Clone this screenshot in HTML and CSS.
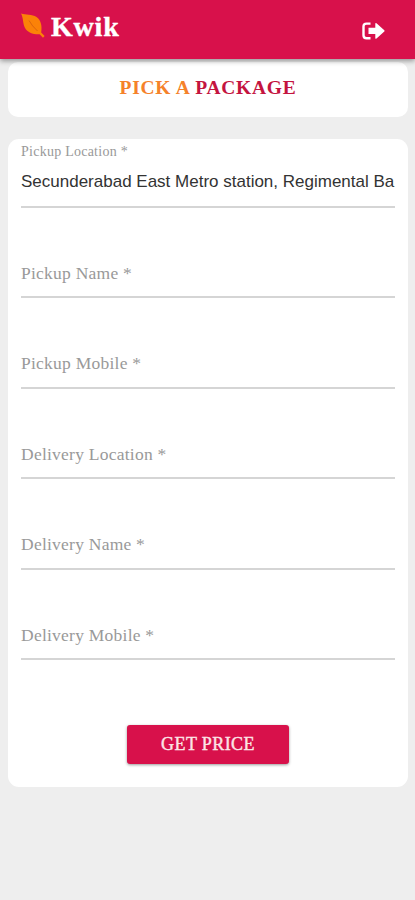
FILE: index.html
```html
<!DOCTYPE html>
<html lang="en">
<head>
<meta charset="utf-8">
<title>Kwik</title>
<link rel="stylesheet" href="styles.css">
</head>
<body>
<header class="bar">
  <div class="brand">
    <svg class="leaf" viewBox="0 0 24 26"><path d="M0 .5C5 2.200 11 1.200 15.500 4C20 7 21.300 13 20.200 19.500L23.600 23L22 24.800L18.600 21.300C12 21.600 6.500 19.500 4 15C1.600 10.500 2.600 5.500 0 .500Z" fill="#fb8208"/><path d="M8 7.500Q11 13 16.500 18" fill="none" stroke="#d8600f" stroke-width=".9"/></svg>
    <span class="name">Kwik</span>
  </div>
  <svg class="exit" viewBox="0 0 23 18"><path d="M8.500 1.600H4.500Q1.500 1.600 1.500 4.600V13.200Q1.500 16.200 4.500 16.200H8.500" fill="none" stroke="#fff" stroke-width="2.400"/><path d="M6.500 5.700H13.300V1.500Q13.500.5 14.500 1.200L22.300 8.200Q23 8.900 22.300 9.600L14.500 16.600Q13.500 17.200 13.300 16.200V12.100H6.500Z" fill="#fff"/></svg>
</header>
<main>
  <h1 class="title"><span class="accent">PICK A</span> PACKAGE</h1>
  <form class="card">
    <div class="field filled"><label>Pickup Location *</label><div class="value">Secunderabad East Metro station, Regimental Ba</div></div>
    <div class="field"><label>Pickup Name *</label></div>
    <div class="field"><label>Pickup Mobile *</label></div>
    <div class="field"><label>Delivery Location *</label></div>
    <div class="field"><label>Delivery Name *</label></div>
    <div class="field"><label>Delivery Mobile *</label></div>
    <button class="submit" type="button">GET PRICE</button>
  </form>
</main>
</body>
</html>
```
FILE: styles.css
```css
* { box-sizing: border-box; }
body { margin: 0; min-height: 900px; background: #eee; font-family: "Liberation Serif", serif; }
.bar { position: relative; height: 59px; padding: 0 30px 0 21px; display: flex; justify-content: space-between; background: #d8114b; box-shadow: 0 2px 5px rgba(0,0,0,.38); }
.brand { display: flex; }
.leaf { width: 24px; height: 26px; margin-top: 13px; }
.name { margin-left: 6px; padding-top: 10px; color: #fff; font-size: 28px; line-height: 34px; font-weight: bold; letter-spacing: .8px; -webkit-text-stroke: .4px #fff; }
.exit { width: 23px; height: 18px; margin-top: 22px; }
main { padding: 3px 7px 0 8px; }
.title { margin: 0 0 22px; height: 55px; padding-top: 14px; border-radius: 10px; background: #fff; color: #c4143f; text-align: center; font-size: 19.5px; line-height: 24px; letter-spacing: .75px; }
.accent { color: #f5822a; }
.card { height: 648px; border-radius: 11px; padding: 0 13px; background: #fff; display: flex; flex-direction: column; }
.field { height: 90.4px; flex: none; padding-top: 53px; border-bottom: 2px solid #d5d5d5; color: #999; font-size: 17.5px; line-height: 24px; letter-spacing: .24px; }
.filled { height: 69px; padding-top: 4px; font-size: 14px; line-height: 18px; letter-spacing: .25px; }
.filled label { display: block; }
.value { margin-top: 9px; white-space: nowrap; color: #333; font: 17px/24px "Liberation Sans", sans-serif; letter-spacing: 0; }
.submit { width: 162px; height: 39px; margin: 65px auto 0; padding: 0; border: 0; border-radius: 3px; background: #d8114b; color: #fce4e6; font: 18px/39px "Liberation Serif", serif; letter-spacing: .4px; -webkit-text-stroke: .4px #fce4e6; box-shadow: 0 1px 3px rgba(0,0,0,.4); }
```
